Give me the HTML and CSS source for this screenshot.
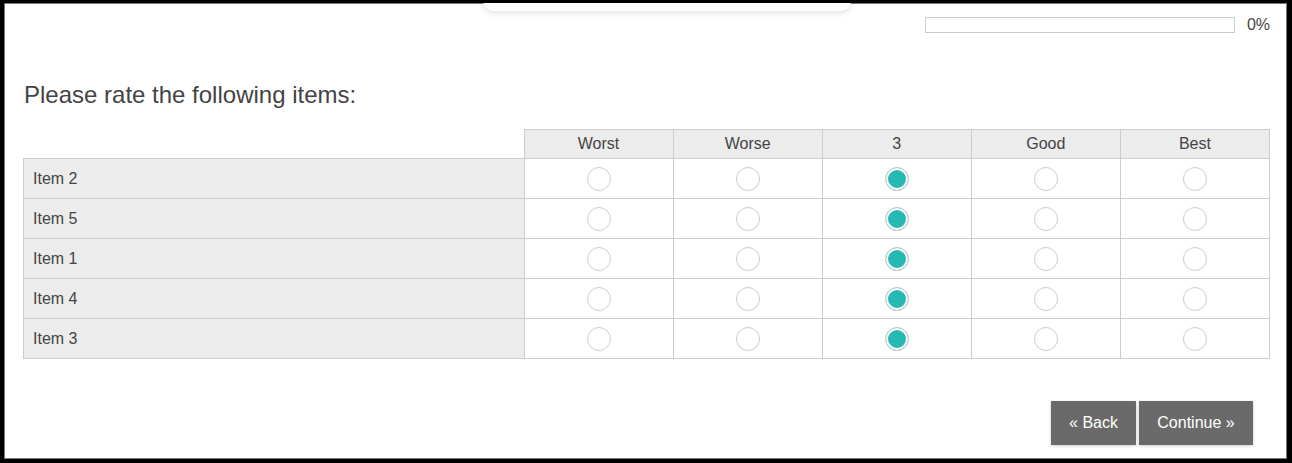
FILE: index.html
```html
<!DOCTYPE html>
<html lang="en">
<head>
    <meta charset="UTF-8">
    <title>Survey</title>
    <link rel="stylesheet" href="styles.css">
</head>
<body>
<div class="frame">
    <div class="top-tab"></div>

    <div class="progress">
        <div class="progress-bar"><div class="progress-fill"></div></div>
        <span class="progress-label">0%</span>
    </div>

    <h1 class="question">Please rate the following items:</h1>

    <table class="matrix">
        <thead>
            <tr>
                <th class="blank"></th>
                <th>Worst</th>
                <th>Worse</th>
                <th>3</th>
                <th>Good</th>
                <th>Best</th>
            </tr>
        </thead>
        <tbody>
            <tr>
                <td class="label">Item 2</td>
                <td><span class="radio"></span></td>
                <td><span class="radio"></span></td>
                <td><span class="radio checked"></span></td>
                <td><span class="radio"></span></td>
                <td><span class="radio"></span></td>
            </tr>
            <tr>
                <td class="label">Item 5</td>
                <td><span class="radio"></span></td>
                <td><span class="radio"></span></td>
                <td><span class="radio checked"></span></td>
                <td><span class="radio"></span></td>
                <td><span class="radio"></span></td>
            </tr>
            <tr>
                <td class="label">Item 1</td>
                <td><span class="radio"></span></td>
                <td><span class="radio"></span></td>
                <td><span class="radio checked"></span></td>
                <td><span class="radio"></span></td>
                <td><span class="radio"></span></td>
            </tr>
            <tr>
                <td class="label">Item 4</td>
                <td><span class="radio"></span></td>
                <td><span class="radio"></span></td>
                <td><span class="radio checked"></span></td>
                <td><span class="radio"></span></td>
                <td><span class="radio"></span></td>
            </tr>
            <tr>
                <td class="label">Item 3</td>
                <td><span class="radio"></span></td>
                <td><span class="radio"></span></td>
                <td><span class="radio checked"></span></td>
                <td><span class="radio"></span></td>
                <td><span class="radio"></span></td>
            </tr>
        </tbody>
    </table>

    <div class="nav">
        <button class="nav-btn back">&laquo; Back</button>
        <button class="nav-btn next">Continue &raquo;</button>
    </div>
</div>
</body>
</html>
```

FILE: styles.css
```css
html, body {
    margin: 0;
    height: 100%;
    background: #fff;
    overflow: hidden;
}
body {
    font-family: "Liberation Sans", Arial, sans-serif;
    color: #444;
}
.frame {
    position: relative;
    box-sizing: border-box;
    height: 463px;
    border-style: solid;
    border-color: #000;
    border-width: 3px 5px 4px 4px;
    box-shadow: inset 0 0 0 1px #777;
    padding: 13px 16px 0 19px;
    overflow: hidden;
}
.top-tab {
    position: absolute;
    top: -12px;
    left: 479px;
    width: 368px;
    height: 20px;
    background: #fff;
    border-radius: 10px;
    box-shadow: 0 2px 6px rgba(0, 0, 0, 0.12);
}
.progress {
    display: flex;
    justify-content: flex-end;
    align-items: center;
    gap: 12px;
    margin-right: 1px;
}
.progress-bar {
    width: 308px;
    height: 14px;
    border: 1px solid #ccc;
    background: #fff;
}
.progress-fill {
    width: 0;
    height: 100%;
    background: #26b9b3;
}
.progress-label {
    font-size: 16px;
    color: #444;
}
.question {
    margin: 47px 0 20px 1px;
    font-size: 24px;
    line-height: 28px;
    font-weight: normal;
    color: #444;
}
.matrix {
    width: 1247px;
    border-collapse: collapse;
    table-layout: fixed;
    font-size: 16px;
}
.matrix th {
    height: 28px;
    padding: 0;
    font-weight: normal;
    background: #ececec;
    border: 1px solid #ccc;
    color: #444;
}
.matrix th.blank {
    width: 500px;
    background: #fff;
    border-top: none;
    border-left: none;
}
.matrix td {
    height: 39px;
    padding: 0;
    border: 1px solid #ccc;
    text-align: center;
    vertical-align: middle;
}
.matrix td.label {
    text-align: left;
    padding-left: 9px;
    background: #ececec;
    color: #444;
}
.radio {
    display: inline-block;
    box-sizing: border-box;
    width: 24px;
    height: 24px;
    border: 1px solid #ccc;
    border-radius: 50%;
    background: #fff;
    vertical-align: middle;
}
.radio.checked {
    background: #26b9b3;
    box-shadow: inset 0 0 0 2px #fff;
}
.nav {
    display: flex;
    justify-content: flex-end;
    gap: 3px;
    margin-top: 42px;
    padding-right: 18px;
}
.nav-btn {
    height: 44px;
    padding: 0;
    border: none;
    background: #6a6a6a;
    color: #fff;
    font-family: "Liberation Sans", Arial, sans-serif;
    font-size: 16px;
    box-shadow: 0 1px 3px rgba(0, 0, 0, 0.2);
    cursor: pointer;
}
.nav-btn.back {
    width: 85px;
}
.nav-btn.next {
    width: 114px;
}
```
